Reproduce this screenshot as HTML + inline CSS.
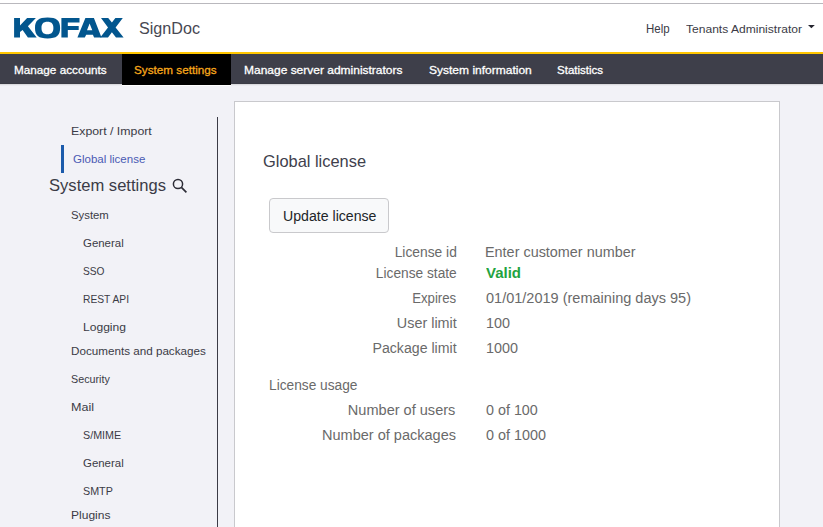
<!DOCTYPE html>
<html><head><meta charset="utf-8">
<style>
*{box-sizing:border-box;margin:0;padding:0}
html,body{width:823px;height:527px;overflow:hidden;background:#f2f2f7;font-family:"Liberation Sans",sans-serif}
.t{position:absolute;white-space:nowrap}
.r{position:absolute}
</style></head><body>
<div class="r" style="left:0;top:0;width:823px;height:52px;background:#fff"></div>
<div class="r" style="left:0;top:3px;width:823px;height:1px;background:#b9b8bd"></div>
<svg class="r" style="left:0;top:0" width="130" height="45" viewBox="0 0 130 45">
<g fill="#02568e">
<polygon points="14.1,18 20,18 20,25.4 27.1,18 35.9,18 27.9,26.2 36.7,37.6 27.9,37.6 22.6,29.9 20,32 20,37.6 14.1,37.6"/>
<path fill-rule="evenodd" d="M47.55,17.50 C56.59,17.50 60.10,20.43 60.10,27.95 C60.10,35.47 56.59,38.40 47.55,38.40 C38.51,38.40 35.00,35.47 35.00,27.95 C35.00,20.43 38.51,17.50 47.55,17.50 Z M47.45,21.70 C51.50,21.70 53.40,23.70 53.40,27.95 C53.40,32.20 51.50,34.20 47.45,34.20 C43.40,34.20 41.50,32.20 41.50,27.95 C41.50,23.70 43.40,21.70 47.45,21.70 Z"/>
<polygon points="61.4,18 79.5,18 79.5,22.5 67.8,22.5 67.8,26 78.7,26 78.7,30 67.8,30 67.8,37.6 61.4,37.6"/>
<path fill-rule="evenodd" d="M77.4,37.6 L85.4,18 L93.9,18 L101.5,37.6 L94.1,37.6 L92.9,34.7 L86.2,34.7 L84.8,37.6 Z M89.6,23.4 L92.3,30.2 L87,30.2 Z"/>
<polygon points="101,18 108.2,18 111.9,22.5 115.4,18 122.8,18 115.6,27.5 123.6,37.6 116,37.6 111.9,32.3 108,37.6 100.2,37.6 108,27.5"/>
</g>
</svg>
<svg class="r" style="left:806px;top:23px" width="12" height="8" viewBox="0 0 12 8"><polygon points="2,2 8.8,2 5.4,5.3" fill="#25252f"/></svg>
<div class="r" style="left:0;top:52px;width:823px;height:2px;background:#ffc600"></div>
<div class="r" style="left:0;top:54px;width:823px;height:30px;background:#3e3f4a"></div>
<div class="r" style="left:0;top:83px;width:823px;height:1px;background:#3b3c46"></div>
<div class="r" style="left:0;top:84px;width:823px;height:1px;background:#dadade"></div>
<div class="r" style="left:0;top:85px;width:823px;height:1px;background:#ebebf0"></div>
<div class="r" style="left:122px;top:54px;width:109px;height:31px;background:#000"></div>
<div class="r" style="left:122px;top:85px;width:109px;height:1px;background:#fff"></div>

<!-- sidebar -->
<div class="r" style="left:217px;top:117px;width:1px;height:410px;background:#3b3b46"></div>
<div class="r" style="left:61px;top:145px;width:3px;height:28px;background:#1c5bab"></div>
<svg class="r" style="left:168px;top:175px" width="24" height="22" viewBox="0 0 24 22">
<circle cx="10" cy="9" r="4.6" fill="none" stroke="#2c2c36" stroke-width="1.5"/>
<line x1="13.4" y1="12.4" x2="18.4" y2="17.3" stroke="#2c2c36" stroke-width="1.7"/>
</svg>

<!-- card -->
<div class="r" style="left:234px;top:101px;width:546px;height:440px;background:#fff;border:1px solid #c9c9cd"></div>
<div class="r" style="left:269px;top:198px;width:120px;height:35px;background:#f8f9fa;border:1px solid #c9c9cc;border-radius:4px"></div>
<div class="t" style="top:20.00px;font-size:16.23px;line-height:16.23px;color:#484852;left:139.20px;transform:scaleX(0.9949);transform-origin:0 0;">SignDoc</div>
<div class="t" style="top:23.00px;font-size:12.03px;line-height:12.03px;color:#3b3b46;left:645.50px;transform:scaleX(0.9547);transform-origin:0 0;">Help</div>
<div class="t" style="top:24.00px;font-size:11.30px;line-height:11.30px;color:#3b3b46;left:686.00px;transform:scaleX(1.0677);transform-origin:0 0;">Tenants Administrator</div>
<div class="t" style="top:64.00px;font-size:11.74px;line-height:11.74px;color:#ffffff;-webkit-text-stroke:0.3px #ffffff;left:13.80px;transform:scaleX(0.9996);transform-origin:0 0;">Manage accounts</div>
<div class="t" style="top:64.00px;font-size:11.74px;line-height:11.74px;color:#f7a81b;-webkit-text-stroke:0.3px #f7a81b;left:133.90px;transform:scaleX(0.9985);transform-origin:0 0;">System settings</div>
<div class="t" style="top:64.00px;font-size:11.74px;line-height:11.74px;color:#ffffff;-webkit-text-stroke:0.3px #ffffff;left:244.00px;transform:scaleX(1.0211);transform-origin:0 0;">Manage server administrators</div>
<div class="t" style="top:64.00px;font-size:11.74px;line-height:11.74px;color:#ffffff;-webkit-text-stroke:0.3px #ffffff;left:428.50px;transform:scaleX(1.0235);transform-origin:0 0;">System information</div>
<div class="t" style="top:64.00px;font-size:11.74px;line-height:11.74px;color:#ffffff;-webkit-text-stroke:0.3px #ffffff;left:556.60px;transform:scaleX(0.9818);transform-origin:0 0;">Statistics</div>
<div class="t" style="top:126.00px;font-size:11.30px;line-height:11.30px;color:#3b3b46;left:71.10px;transform:scaleX(1.0905);transform-origin:0 0;">Export / Import</div>
<div class="t" style="top:153.00px;font-size:11.74px;line-height:11.74px;color:#4a5ab4;left:72.70px;transform:scaleX(0.9808);transform-origin:0 0;">Global license</div>
<div class="t" style="top:178.00px;font-size:16.81px;line-height:16.81px;color:#3b3b46;left:49.30px;transform:scaleX(0.9868);transform-origin:0 0;">System settings</div>
<div class="t" style="top:210.00px;font-size:11.30px;line-height:11.30px;color:#3b3b46;left:70.60px;transform:scaleX(1.0034);transform-origin:0 0;">System</div>
<div class="t" style="top:238.00px;font-size:11.30px;line-height:11.30px;color:#3b3b46;left:82.60px;transform:scaleX(1.0124);transform-origin:0 0;">General</div>
<div class="t" style="top:266.00px;font-size:11.30px;line-height:11.30px;color:#3b3b46;left:82.60px;transform:scaleX(0.9011);transform-origin:0 0;">SSO</div>
<div class="t" style="top:294.00px;font-size:11.30px;line-height:11.30px;color:#3b3b46;left:82.60px;transform:scaleX(0.9081);transform-origin:0 0;">REST API</div>
<div class="t" style="top:322.00px;font-size:11.30px;line-height:11.30px;color:#3b3b46;left:82.60px;transform:scaleX(1.0692);transform-origin:0 0;">Logging</div>
<div class="t" style="top:346.00px;font-size:11.30px;line-height:11.30px;color:#3b3b46;left:70.90px;transform:scaleX(1.0320);transform-origin:0 0;">Documents and packages</div>
<div class="t" style="top:374.00px;font-size:11.30px;line-height:11.30px;color:#3b3b46;left:70.90px;transform:scaleX(0.9500);transform-origin:0 0;">Security</div>
<div class="t" style="top:402.00px;font-size:11.30px;line-height:11.30px;color:#3b3b46;left:70.90px;transform:scaleX(1.1101);transform-origin:0 0;">Mail</div>
<div class="t" style="top:430.00px;font-size:11.30px;line-height:11.30px;color:#3b3b46;left:82.60px;transform:scaleX(0.9500);transform-origin:0 0;">S/MIME</div>
<div class="t" style="top:458.00px;font-size:11.30px;line-height:11.30px;color:#3b3b46;left:82.60px;transform:scaleX(1.0124);transform-origin:0 0;">General</div>
<div class="t" style="top:486.00px;font-size:11.30px;line-height:11.30px;color:#3b3b46;left:82.60px;transform:scaleX(0.9500);transform-origin:0 0;">SMTP</div>
<div class="t" style="top:510.00px;font-size:11.30px;line-height:11.30px;color:#3b3b46;left:70.90px;transform:scaleX(1.0658);transform-origin:0 0;">Plugins</div>
<div class="t" style="top:154.00px;font-size:16.81px;line-height:16.81px;color:#40404c;left:263.00px;transform:scaleX(0.9762);transform-origin:0 0;">Global license</div>
<div class="t" style="top:208.00px;font-size:15.07px;line-height:15.07px;color:#212529;left:282.50px;transform:scaleX(0.9382);transform-origin:0 0;">Update license</div>
<div class="t" style="top:244.00px;font-size:15.07px;line-height:15.07px;color:#6a6a6a;left:388.67px;transform:scaleX(0.9170);transform-origin:67.83px 0;">License id</div>
<div class="t" style="top:265.00px;font-size:15.07px;line-height:15.07px;color:#6a6a6a;left:367.73px;transform:scaleX(0.9114);transform-origin:88.77px 0;">License state</div>
<div class="t" style="top:290.00px;font-size:15.07px;line-height:15.07px;color:#6a6a6a;left:406.27px;transform:scaleX(0.8779);transform-origin:50.23px 0;">Expires</div>
<div class="t" style="top:315.00px;font-size:15.07px;line-height:15.07px;color:#6a6a6a;left:393.73px;transform:scaleX(0.9543);transform-origin:62.77px 0;">User limit</div>
<div class="t" style="top:340.00px;font-size:15.07px;line-height:15.07px;color:#6a6a6a;left:366.92px;transform:scaleX(0.9388);transform-origin:89.58px 0;">Package limit</div>
<div class="t" style="top:244.00px;font-size:15.07px;line-height:15.07px;color:#6a6a6a;left:485.30px;transform:scaleX(0.9562);transform-origin:0 0;">Enter customer number</div>
<div class="t" style="top:265.00px;font-size:15.07px;line-height:15.07px;color:#23a33f;font-weight:bold;left:486.00px;transform:scaleX(0.9951);transform-origin:0 0;">Valid</div>
<div class="t" style="top:290.00px;font-size:15.07px;line-height:15.07px;color:#6a6a6a;left:486.00px;transform:scaleX(0.9639);transform-origin:0 0;">01/01/2019 (remaining days 95)</div>
<div class="t" style="top:315.00px;font-size:15.07px;line-height:15.07px;color:#6a6a6a;left:486.00px;transform:scaleX(0.9550);transform-origin:0 0;">100</div>
<div class="t" style="top:340.00px;font-size:15.07px;line-height:15.07px;color:#6a6a6a;left:486.00px;transform:scaleX(0.9550);transform-origin:0 0;">1000</div>
<div class="t" style="top:377.00px;font-size:15.07px;line-height:15.07px;color:#6a6a6a;left:268.80px;transform:scaleX(0.9109);transform-origin:0 0;">License usage</div>
<div class="t" style="top:402.00px;font-size:15.07px;line-height:15.07px;color:#6a6a6a;left:344.46px;transform:scaleX(0.9655);transform-origin:111.34px 0;">Number of users</div>
<div class="t" style="top:427.00px;font-size:15.07px;line-height:15.07px;color:#6a6a6a;left:317.32px;transform:scaleX(0.9641);transform-origin:138.98px 0;">Number of packages</div>
<div class="t" style="top:402.00px;font-size:15.07px;line-height:15.07px;color:#6a6a6a;left:486.00px;transform:scaleX(0.9513);transform-origin:0 0;">0 of 100</div>
<div class="t" style="top:427.00px;font-size:15.07px;line-height:15.07px;color:#6a6a6a;left:486.00px;transform:scaleX(0.9550);transform-origin:0 0;">0 of 1000</div>
</body></html>
